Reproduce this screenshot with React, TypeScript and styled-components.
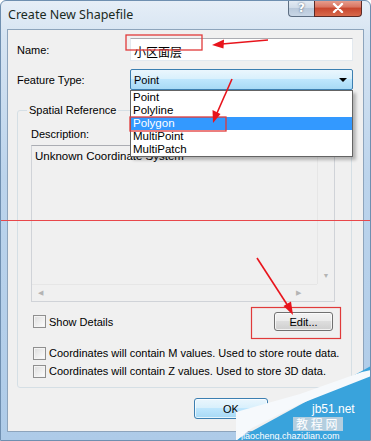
import styled, { createGlobalStyle } from "styled-components";

const GlobalStyle = createGlobalStyle`
  html, body {
    margin: 0;
    padding: 0;
    background: #ffffff;
  }
  body {
    font-family: "Liberation Sans", Arial, sans-serif;
  }
`;

const FEATURE_TYPES = ["Point", "Polyline", "Polygon", "MultiPoint", "MultiPatch"];

export default function App() {
  return (
    <>
      <GlobalStyle />
      <Window>
        <TitleBar>
          <Title>Create New Shapefile</Title>
          <CaptionButtons>
            <HelpButton>?</HelpButton>
            <CloseButton>
              <svg width="12" height="10" viewBox="0 0 12 10">
                <path d="M2 1 L10 9 M10 1 L2 9" stroke="#fff" strokeWidth="2.4" strokeLinecap="round" />
              </svg>
            </CloseButton>
          </CaptionButtons>
        </TitleBar>

        <Client>
          <FormRow>
            <Label>Name:</Label>
            <TextInput>小区面层</TextInput>
          </FormRow>
          <FormRow $gap={8}>
            <Label>Feature Type:</Label>
            <ComboWrap>
              <Combo>
                <span>Point</span>
                <ComboArrow />
              </Combo>
              <DropList>
                {FEATURE_TYPES.map((t) => (
                  <DropItem key={t} $selected={t === "Polygon"}>
                    {t}
                  </DropItem>
                ))}
              </DropList>
            </ComboWrap>
          </FormRow>

          <Group>
            <Legend>Spatial Reference</Legend>
            <SmallLabel>Description:</SmallLabel>
            <DescBox>
              <DescText>Unknown Coordinate System</DescText>
              <VScroll>
                <ScrollArrow>▲</ScrollArrow>
                <ScrollArrow>▼</ScrollArrow>
              </VScroll>
              <HScroll>
                <ScrollArrow>◀</ScrollArrow>
                <ScrollArrow>▶</ScrollArrow>
              </HScroll>
              <ScrollCorner />
            </DescBox>

            <DetailsRow>
              <CheckRow>
                <CheckBox />
                <span>Show Details</span>
              </CheckRow>
              <WinButton $width={59}>Edit...</WinButton>
            </DetailsRow>

            <Options>
              <CheckRow>
                <CheckBox />
                <span>Coordinates will contain M values. Used to store route data.</span>
              </CheckRow>
              <CheckRow>
                <CheckBox />
                <span>Coordinates will contain Z values. Used to store 3D data.</span>
              </CheckRow>
            </Options>
          </Group>

          <ButtonRow>
            <WinButton $width={74} $default>OK</WinButton>
          </ButtonRow>
        </Client>

        <Annotations width="371" height="441" viewBox="0 0 371 441">
          <line x1="0" y1="220.5" x2="371" y2="220.5" stroke="#e8474a" strokeWidth="1" />
          <rect x="126" y="35" width="76" height="15" fill="none" stroke="#e03a3a" strokeWidth="1.3" />
          <rect x="130" y="117" width="96" height="14" fill="none" stroke="#e03a3a" strokeWidth="1.3" />
          <rect x="251.5" y="307.5" width="89" height="31" fill="none" stroke="#e03a3a" strokeWidth="1.2" />
          <path d="M268 40 L222 44" stroke="#e8141c" strokeWidth="1.6" />
          <path d="M212 45 L224 39.5 L223.5 48.5 Z" fill="#e8141c" />
          <path d="M232 79 L217 113" stroke="#e8141c" strokeWidth="1.6" />
          <path d="M213 123 L212.5 110 L220.5 114 Z" fill="#e8141c" />
          <path d="M257 258 L288 306" stroke="#e8141c" strokeWidth="1.6" />
          <path d="M293 315 L283.5 306 L291 301.5 Z" fill="#e8141c" />
        </Annotations>

        <Watermark width="371" height="441" viewBox="0 0 371 441">
          <polygon points="371,366 371,441 234,441" fill="#39a3dc" />
          <polygon points="236,412 300,394 362,372 371,370 371,376 300,404 252,428 236,441" fill="#f6f9fc" />
          <text x="312" y="413" fill="#ffffff" fontFamily="Liberation Sans, sans-serif" fontSize="12">jb51.net</text>
          <rect x="293" y="417" width="50" height="14" fill="#c9d6df" opacity="0.85" />
          <text x="296" y="429" fill="#ffffff" fontFamily="Noto Sans CJK SC, sans-serif" fontSize="12">教 程 网</text>
          <text x="241" y="439" fill="#ffffff" fontFamily="Liberation Sans, sans-serif" fontSize="9">jiaocheng.chazidian.com</text>
        </Watermark>
      </Window>
    </>
  );
}

const Window = styled.div`
  position: relative;
  width: 371px;
  height: 441px;
  box-sizing: border-box;
  display: flex;
  flex-direction: column;
  background: linear-gradient(180deg, #e6eef7 0%, #d6e4f2 8%, #bcd4ec 40%, #aecbe8 100%);
  border: 1px solid #6f8fb0;
  border-radius: 6px 6px 0 0;
  overflow: hidden;
`;

const TitleBar = styled.div`
  height: 28px;
  display: flex;
  justify-content: space-between;
  align-items: flex-start;
  padding-left: 7px;
  flex-shrink: 0;
`;

const Title = styled.div`
  font-family: "Noto Sans", "Open Sans", sans-serif;
  font-size: 12.5px;
  color: #1b2a1e;
  margin-top: 5px;
`;

const CaptionButtons = styled.div`
  display: flex;
  margin-right: 8px;
  margin-top: -1px;
`;

const CapBase = styled.div`
  height: 17px;
  display: flex;
  align-items: center;
  justify-content: center;
  box-sizing: border-box;
  border: 1px solid #5d6e82;
  border-top: none;
`;

const HelpButton = styled(CapBase)`
  width: 26px;
  border-radius: 0 0 0 4px;
  border-right: none;
  background: linear-gradient(180deg, #e6edf5 0%, #cfdbe8 50%, #b8c8da 51%, #c8d6e6 100%);
  color: #ffffff;
  font-family: "DejaVu Sans", sans-serif;
  font-weight: bold;
  font-size: 12px;
  text-shadow: 0 0 2px #3b4d63;
`;

const CloseButton = styled(CapBase)`
  width: 48px;
  border-radius: 0 0 4px 0;
  border-color: #5a2a26;
  background: linear-gradient(180deg, #e8a394 0%, #d9735f 45%, #c7452d 50%, #d86a4c 100%);
`;

const Client = styled.div`
  position: relative;
  flex: 1;
  margin: 0 6px 8px 6px;
  background: #f0f0f0;
  border: 1px solid #8da4bc;
  padding-top: 8px;
  display: flex;
  flex-direction: column;
  font-size: 11px;
  color: #000;
  white-space: nowrap;
`;

const FormRow = styled.div<{ $gap?: number }>`
  display: flex;
  align-items: center;
  padding-left: 9px;
  padding-right: 10px;
  margin-top: ${(p) => p.$gap ?? 0}px;
`;

const Label = styled.div`
  width: 113px;
  flex-shrink: 0;
`;

const TextInput = styled.div`
  flex: 1;
  height: 23px;
  box-sizing: border-box;
  background: #ffffff;
  border: 1px solid #e3e9ef;
  border-top-color: #abadb3;
  padding: 4px 3px 0;
  font-family: "Liberation Sans", "Noto Sans CJK SC", sans-serif;
  font-size: 12px;
`;

const ComboWrap = styled.div`
  position: relative;
  flex: 1;
`;

const Combo = styled.div`
  height: 21px;
  box-sizing: border-box;
  border: 1px solid #3c7fb1;
  border-radius: 2px;
  background: linear-gradient(180deg, #eaf6fd 0%, #d9f0fc 45%, #bee6fd 50%, #a7d9f5 100%);
  display: flex;
  align-items: center;
  justify-content: space-between;
  padding: 0 5px 0 3px;
`;

const ComboArrow = styled.div`
  width: 0;
  height: 0;
  border-left: 4px solid transparent;
  border-right: 4px solid transparent;
  border-top: 4px solid #000;
`;

const DropList = styled.div`
  position: absolute;
  top: 100%;
  left: 0;
  right: 0;
  z-index: 5;
  background: #ffffff;
  border: 1px solid #646464;
  box-shadow: 3px 3px 3px rgba(0, 0, 0, 0.25);
  display: flex;
  flex-direction: column;
`;

const DropItem = styled.div<{ $selected?: boolean }>`
  height: 13px;
  line-height: 13px;
  padding-left: 2px;
  font-size: 11.5px;
  background: ${(p) => (p.$selected ? "#3399ff" : "transparent")};
  color: ${(p) => (p.$selected ? "#ffffff" : "#000")};
`;

const Group = styled.fieldset`
  margin: 14px 11px 0 9px;
  padding: 11px 16px 7px 13px;
  border: 1px solid #d5dfe5;
  border-radius: 3px;
  min-width: 0;
`;

const Legend = styled.legend`
  margin-left: -4px;
  padding: 0 2px;
  line-height: 13px;
  font-size: 11px;
`;

const SmallLabel = styled.div`
  line-height: 13px;
`;

const DescBox = styled.div`
  margin-top: 4px;
  height: 157px;
  box-sizing: border-box;
  border: 1px solid #d0d3d8;
  border-top-color: #abadb3;
  display: grid;
  grid-template-columns: 1fr 17px;
  grid-template-rows: 1fr 17px;
`;

const DescText = styled.div`
  padding: 4px 3px;
  font-size: 11.5px;
`;

const VScroll = styled.div`
  display: flex;
  flex-direction: column;
  justify-content: space-between;
  align-items: center;
  border-left: 1px solid #e6e6e6;
  padding: 3px 0 4px;
`;

const HScroll = styled.div`
  display: flex;
  justify-content: space-between;
  align-items: center;
  border-top: 1px solid #e6e6e6;
  padding: 0 16px 0 6px;
`;

const ScrollCorner = styled.div`
  background: #f0f0f0;
`;

const ScrollArrow = styled.span`
  font-size: 7px;
  line-height: 8px;
  color: #b4b4b4;
`;

const DetailsRow = styled.div`
  margin-top: 10px;
  display: flex;
  align-items: center;
  justify-content: space-between;
  padding-left: 2px;
  padding-right: 2px;
`;

const CheckRow = styled.div`
  display: flex;
  align-items: center;
  height: 18px;
  gap: 3px;
`;

const CheckBox = styled.div`
  width: 13px;
  height: 13px;
  flex-shrink: 0;
  box-sizing: border-box;
  border: 1px solid #8f8f8f;
  background: linear-gradient(135deg, #dcdcdc 0%, #f4f4f4 70%, #ffffff 100%);
  box-shadow: inset 0 0 0 1px #f4f4f4;
`;

const Options = styled.div`
  margin-top: 13px;
  padding-left: 2px;
  display: flex;
  flex-direction: column;
`;

const WinButton = styled.div<{ $width: number; $default?: boolean }>`
  width: ${(p) => p.$width}px;
  height: ${(p) => (p.$default ? 21 : 19)}px;
  box-sizing: border-box;
  display: flex;
  align-items: center;
  justify-content: center;
  border: 1px solid ${(p) => (p.$default ? "#3c7fb1" : "#707070")};
  border-radius: 3px;
  background: ${(p) =>
    p.$default
      ? "linear-gradient(180deg, #eaf6fd 0%, #d9f0fc 45%, #bee6fd 50%, #a7d9f5 100%)"
      : "linear-gradient(180deg, #f2f2f2 0%, #ebebeb 45%, #dddddd 50%, #cfcfcf 100%)"};
  box-shadow: inset 0 0 0 1px rgba(255, 255, 255, 0.7);
`;

const ButtonRow = styled.div`
  margin-top: 10px;
  display: flex;
  justify-content: flex-start;
  padding-left: 186px;
`;

const Annotations = styled.svg`
  position: absolute;
  left: -1px;
  top: -1px;
  pointer-events: none;
  z-index: 10;
`;

const Watermark = styled.svg`
  position: absolute;
  left: -1px;
  top: -1px;
  pointer-events: none;
  z-index: 11;
`;
